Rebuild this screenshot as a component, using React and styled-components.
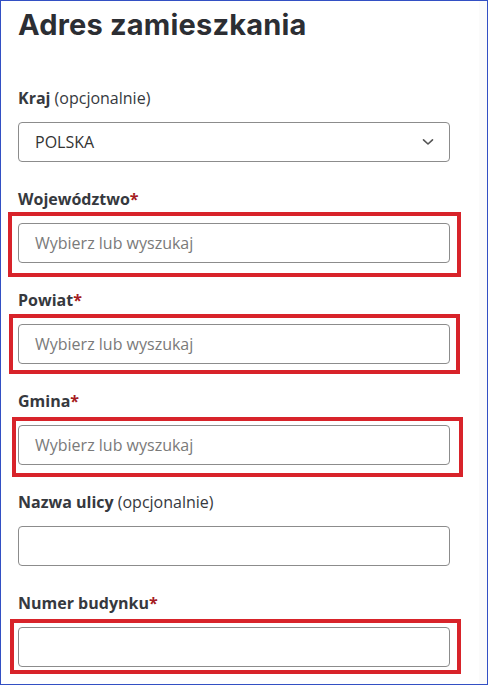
import React from 'react';
import styled, { createGlobalStyle } from 'styled-components';

const GlobalStyle = createGlobalStyle`
  html, body {
    margin: 0;
    padding: 0;
    background: #ffffff;
  }
  * {
    box-sizing: border-box;
  }
`;

const Frame = styled.div`
  width: 488px;
  height: 685px;
  border: 1px solid #3350c4;
  background: #ffffff;
  overflow: hidden;
  display: flex;
`;

const Form = styled.div`
  flex: 1;
  padding: 0 0 0 17px;
  font-family: 'Open Sans', 'Liberation Sans', sans-serif;
  color: #333333;
`;

const Gutter = styled.div`
  width: 8px;
  background: #fbfbfb;
`;

const Title = styled.h1`
  margin: 4px 0 41px;
  font-family: Inter, 'Open Sans', sans-serif;
  font-size: 29px;
  line-height: 40px;
  font-weight: 700;
  color: #2c2e33;
  letter-spacing: 0.2px;
`;

const Field = styled.div`
  width: 432px;
  margin-bottom: 25px;
`;

const Label = styled.div`
  font-size: 16px;
  line-height: 24px;
  height: 24px;
  margin-bottom: 12px;
  color: #36393e;

  b {
    font-weight: 700;
  }
`;

const Required = styled.span`
  color: #a51c22;
  font-weight: 700;
`;

const Highlight = styled.div`
  position: relative;

  &::after {
    content: '';
    position: absolute;
    pointer-events: none;
    top: ${(p) => -p.$t}px;
    bottom: ${(p) => -p.$b}px;
    left: ${(p) => -p.$l}px;
    right: ${(p) => -p.$r}px;
    border: 4px solid #d8232a;
  }
`;

const Input = styled.div`
  position: relative;
  height: 40px;
  border: 1px solid #8c8c8c;
  border-radius: 4px;
  background: #ffffff;
  padding: 0 16px;
  display: flex;
  align-items: center;
  justify-content: space-between;
  font-size: 16px;
  color: ${(p) => (p.$placeholder ? '#7a7a7a' : '#333333')};
`;

const Chevron = styled.svg`
  width: 12px;
  height: 8px;
  margin-right: -1px;
`;

const FieldLabel = ({ name, optional }) => (
  <Label>
    <b>{name}</b>
    {optional ? <span> (opcjonalnie)</span> : <Required>*</Required>}
  </Label>
);

const marked = [
  { name: 'Województwo', box: { t: 11, b: 14, l: 10, r: 11 } },
  { name: 'Powiat', box: { t: 10, b: 10, l: 9, r: 10 } },
  { name: 'Gmina', box: { t: 8, b: 12, l: 6, r: 13 } },
];

export default function App() {
  return (
    <>
      <GlobalStyle />
      <Frame>
        <Form>
          <Title>Adres zamieszkania</Title>

          <Field>
            <FieldLabel name="Kraj" optional />
            <Input>
              <span>POLSKA</span>
              <Chevron viewBox="0 0 12 8" fill="none">
                <path d="M1.5 1.8 L6 6 L10.5 1.8" stroke="#555" strokeWidth="1.6" strokeLinecap="round" strokeLinejoin="round" />
              </Chevron>
            </Input>
          </Field>

          {marked.map((f) => (
            <Field key={f.name}>
              <FieldLabel name={f.name} />
              <Highlight $t={f.box.t} $b={f.box.b} $l={f.box.l} $r={f.box.r}>
                <Input $placeholder>Wybierz lub wyszukaj</Input>
              </Highlight>
            </Field>
          ))}

          <Field>
            <FieldLabel name="Nazwa ulicy" optional />
            <Input />
          </Field>

          <Field>
            <FieldLabel name="Numer budynku" />
            <Highlight $t={8} $b={7} $l={8} $r={11}>
              <Input />
            </Highlight>
          </Field>
        </Form>
        <Gutter />
      </Frame>
    </>
  );
}
